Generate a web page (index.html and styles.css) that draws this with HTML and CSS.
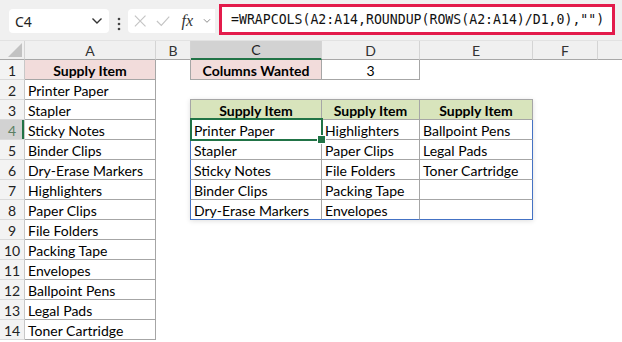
FILE: index.html
```html
<!DOCTYPE html>
<html lang="en">
<head>
    <meta charset="UTF-8">
    <title>WRAPCOLS</title>
    <link rel="stylesheet" href="styles.css">
</head>
<body>
    <div class="topbar">
        <div class="namebox">
            <span>C4</span>
            <svg width="12" height="8" viewBox="0 0 12 8"><path d="M1.5 1.5 L6 6 L10.5 1.5" fill="none" stroke="#333" stroke-width="1.4"/></svg>
        </div>
        <svg class="dots" width="4" height="14" viewBox="0 0 4 14"><circle cx="2" cy="2" r="1.3" fill="#444"/><circle cx="2" cy="7" r="1.3" fill="#444"/><circle cx="2" cy="12" r="1.3" fill="#444"/></svg>
        <div class="fxbox">
            <svg width="14" height="14" viewBox="0 0 14 14"><path d="M1 1 L13 13 M13 1 L1 13" stroke="#c4c4c4" stroke-width="1.3"/></svg>
            <svg width="16" height="12" viewBox="0 0 16 12"><path d="M1 6 L6 11 L15 1" fill="none" stroke="#c4c4c4" stroke-width="1.3"/></svg>
            <span class="fx">fx</span>
            <svg width="9" height="6" viewBox="0 0 9 6"><path d="M1 1 L4.5 4.5 L8 1" fill="none" stroke="#888" stroke-width="1.1"/></svg>
        </div>
        <div class="formula">=WRAPCOLS(A2:A14,ROUNDUP(ROWS(A2:A14)/D1,0),"")</div>
    </div>

    <div class="sheet">
        <!-- column headers -->
        <div class="ch corner"><svg width="14" height="14" viewBox="0 0 14 14"><polygon points="14,0 14,14 0,14" fill="#c2c2c2"/></svg></div>
        <div class="ch">A</div>
        <div class="ch">B</div>
        <div class="ch active">C</div>
        <div class="ch">D</div>
        <div class="ch">E</div>
        <div class="ch">F</div>
        <div class="ch last"></div>

        <!-- wrapped result -->
        <div class="result">
            <div class="th first">Supply Item</div>
            <div class="th">Supply Item</div>
            <div class="th">Supply Item</div>
            <div class="td first selected">Printer Paper</div>
            <div class="td">Highlighters</div>
            <div class="td end">Ballpoint Pens</div>
            <div class="td first">Stapler</div>
            <div class="td">Paper Clips</div>
            <div class="td end">Legal Pads</div>
            <div class="td first">Sticky Notes</div>
            <div class="td">File Folders</div>
            <div class="td end">Toner Cartridge</div>
            <div class="td first">Binder Clips</div>
            <div class="td">Packing Tape</div>
            <div class="td end"></div>
            <div class="td first bottom">Dry-Erase Markers</div>
            <div class="td bottom">Envelopes</div>
            <div class="td end bottom"></div>
        </div>

        <div class="rh">1</div><div class="c a pink head">Supply Item</div><div class="c"></div><div class="c pink head boxed">Columns Wanted</div><div class="c val">3</div><div class="c"></div><div class="c"></div><div class="c"></div>
        <div class="rh">2</div><div class="c a">Printer Paper</div><div class="c"></div><div class="c"></div><div class="c"></div><div class="c"></div><div class="c"></div><div class="c"></div>
        <div class="rh">3</div><div class="c a">Stapler</div><div class="c"></div><div class="c"></div><div class="c"></div>
        <div class="rh on">4</div><div class="c a">Sticky Notes</div><div class="c"></div><div class="c"></div><div class="c"></div>
        <div class="rh">5</div><div class="c a">Binder Clips</div><div class="c"></div><div class="c"></div><div class="c"></div>
        <div class="rh">6</div><div class="c a">Dry-Erase Markers</div><div class="c"></div><div class="c"></div><div class="c"></div>
        <div class="rh">7</div><div class="c a">Highlighters</div><div class="c"></div><div class="c"></div><div class="c"></div>
        <div class="rh">8</div><div class="c a">Paper Clips</div><div class="c"></div><div class="c"></div><div class="c"></div>
        <div class="rh">9</div><div class="c a">File Folders</div><div class="c"></div><div class="c"></div><div class="c"></div><div class="c"></div><div class="c"></div><div class="c"></div>
        <div class="rh">10</div><div class="c a">Packing Tape</div><div class="c"></div><div class="c"></div><div class="c"></div><div class="c"></div><div class="c"></div><div class="c"></div>
        <div class="rh">11</div><div class="c a">Envelopes</div><div class="c"></div><div class="c"></div><div class="c"></div><div class="c"></div><div class="c"></div><div class="c"></div>
        <div class="rh">12</div><div class="c a">Ballpoint Pens</div><div class="c"></div><div class="c"></div><div class="c"></div><div class="c"></div><div class="c"></div><div class="c"></div>
        <div class="rh">13</div><div class="c a">Legal Pads</div><div class="c"></div><div class="c"></div><div class="c"></div><div class="c"></div><div class="c"></div><div class="c"></div>
        <div class="rh">14</div><div class="c a">Toner Cartridge</div><div class="c"></div><div class="c"></div><div class="c"></div><div class="c"></div><div class="c"></div><div class="c"></div>
    </div>
</body>
</html>
```

FILE: styles.css
```css
* {
    box-sizing: border-box;
}
body {
    margin: 0;
    width: 622px;
    height: 342px;
    overflow: hidden;
    background: #fff;
    font-family: Lato, "Liberation Sans", sans-serif;
}

/* formula bar */
.topbar {
    display: flex;
    align-items: flex-start;
    height: 41px;
    padding: 4px 0 0 9px;
    background: #f0f0f0;
    border-bottom: 1px solid #e2e2e2;
}
.namebox {
    display: flex;
    align-items: center;
    justify-content: space-between;
    width: 100px;
    height: 24px;
    margin-top: 5px;
    padding: 0 6px 0 6px;
    background: #fff;
    border-radius: 4px;
    font-family: "Noto Sans", sans-serif;
    font-size: 14px;
    color: #222;
}
.dots {
    margin: 13px 0 0 8px;
}
.fxbox {
    display: flex;
    align-items: center;
    gap: 10px;
    width: 87px;
    height: 24px;
    margin: 5px 0 0 7px;
    padding: 0 4px 0 6px;
    background: #fff;
    border-radius: 4px 0 0 4px;
}
.fx {
    font-family: "Liberation Serif", serif;
    font-style: italic;
    font-size: 16px;
    color: #333;
    margin-left: 1px;
}
.formula {
    width: 396px;
    height: 31px;
    margin-left: 4px;
    padding-left: 9px;
    border: 3px solid #e31b4b;
    background: #fff;
    font-family: "DejaVu Sans Mono", monospace;
    font-size: 13.2px;
    line-height: 25px;
    color: #111;
    white-space: nowrap;
}

/* grid */
.sheet {
    display: grid;
    grid-template-columns: 25px 131px 35px 131px 98px 113px 65px 1fr;
    grid-template-rows: 19px;
    grid-auto-rows: 20px;
    font-size: 14px;
}
.ch {
    display: flex;
    align-items: center;
    justify-content: center;
    background: #f0f0f0;
    border-right: 1px solid #d4d4d4;
    border-bottom: 1px solid #a8a8a8;
    color: #333;
    font-size: 14px;
}
.ch.last {
    border-right: none;
}
.ch.corner {
    align-items: flex-end;
    justify-content: flex-end;
    padding: 0 2px 2px 0;
}
.ch.active {
    background: #d2d2d2;
    border-bottom: 2px solid #217346;
    color: #222;
}
.rh {
    display: flex;
    align-items: center;
    justify-content: center;
    padding-top: 1px;
    background: #f3f3f3;
    border-right: 1px solid #c8c8c8;
    border-bottom: 1px solid #dadada;
    color: #222;
}
.rh.on {
    background: #d2d2d2;
    color: #5b7f63;
    box-shadow: inset -2px 0 0 #217346;
}
.c {
    padding: 1px 3px 0;
    line-height: 19px;
    white-space: nowrap;
    color: #000;
}
.c.a {
    border-right: 1px solid #a6a6a6;
    border-bottom: 1px solid #a6a6a6;
}
.pink {
    background: #f2dcdb;
}
.head {
    font-weight: bold;
    text-align: center;
}
.boxed {
    margin-left: -1px;
    border-left: 1px solid #a6a6a6;
    border-right: 1px solid #a6a6a6;
    border-bottom: 1px solid #a6a6a6;
}
.val {
    text-align: center;
    border-right: 1px solid #a6a6a6;
    border-bottom: 1px solid #a6a6a6;
}

/* WRAPCOLS spill */
.result {
    grid-column: 4 / 7;
    grid-row: 4 / 10;
    display: grid;
    grid-template-columns: 132px 98px 113px;
    grid-template-rows: 21px repeat(5, 20px);
    margin: -1px 0 0 -1px;
    box-shadow: 0 1px 5px rgba(0, 0, 0, 0.13);
    background: #fff;
}
.th, .td {
    padding: 1px 3px 0;
    line-height: 19px;
    white-space: nowrap;
    border-right: 1px solid #a6a6a6;
    border-bottom: 1px solid #a6a6a6;
}
.th {
    background: #d8e4bc;
    font-weight: bold;
    text-align: center;
    border-top: 1px solid #a6a6a6;
}
.th.first {
    border-left: 1px solid #a6a6a6;
}
.td.first {
    border-left: 1px solid #4472c4;
}
.td.end {
    border-right-color: #4472c4;
}
.td.bottom {
    border-bottom-color: #4472c4;
}
.selected {
    position: relative;
}
.selected::after {
    content: "";
    position: absolute;
    top: -2px;
    left: -1px;
    right: -2px;
    bottom: -2px;
    border: 2px solid #217346;
}
.selected::before {
    content: "";
    position: absolute;
    right: -5px;
    bottom: -5px;
    width: 7px;
    height: 7px;
    background: #217346;
    border: 1px solid #fff;
    z-index: 1;
}
```
